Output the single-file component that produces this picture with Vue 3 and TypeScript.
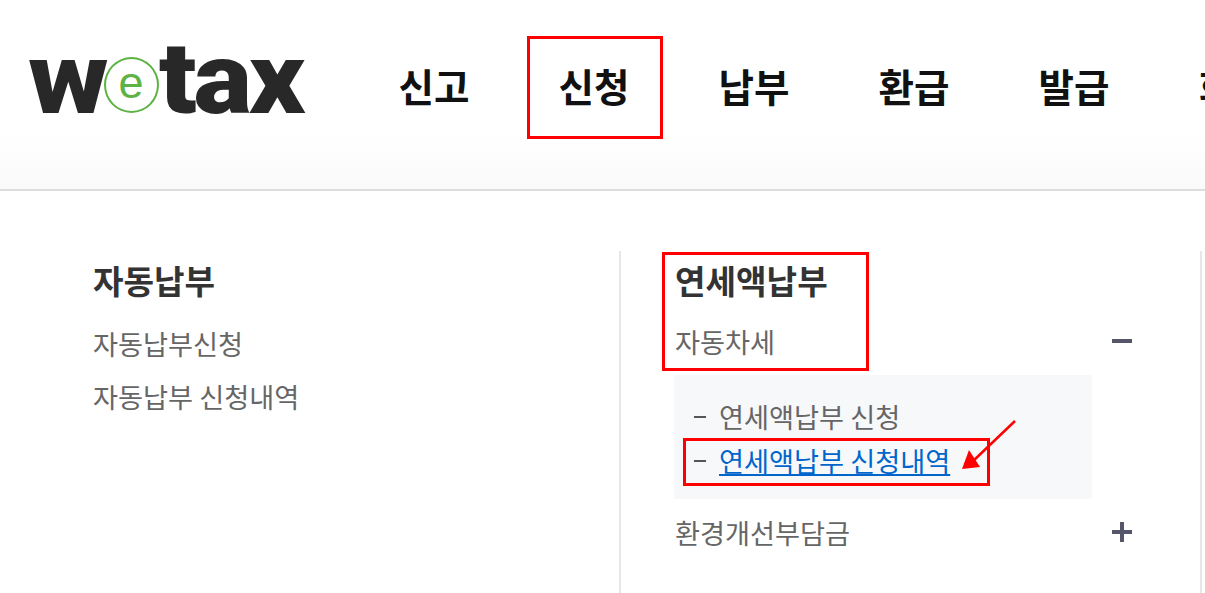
<template>
  <div class="page">
    <header class="top">
      <div class="logo">
        <span class="logo-w">w</span>
        <span class="logo-e">e</span>
        <span class="logo-rest">tax</span>
      </div>
      <nav class="gnb">
        <a v-for="m in menus" :key="m" class="gnb-item">{{ m }}</a>
      </nav>
    </header>

    <main class="sitemap">
      <section class="col col-first">
        <h2>자동납부</h2>
        <ul class="sub">
          <li>자동납부신청</li>
          <li>자동납부 신청내역</li>
        </ul>
      </section>
      <section class="col col-second">
        <h2>연세액납부</h2>
        <div class="acc-row">
          <span>자동차세</span>
          <i class="sign minus"></i>
        </div>
        <ul class="depth">
          <li>연세액납부 신청</li>
          <li><a href="#" @click.prevent>연세액납부 신청내역</a></li>
        </ul>
        <div class="acc-row second">
          <span>환경개선부담금</span>
          <i class="sign plus"></i>
        </div>
      </section>
    </main>

    <!-- 빨간 표시들 -->
    <div class="mark mark-nav"></div>
    <div class="mark mark-col"></div>
    <div class="mark mark-link"></div>
    <svg class="arrow" width="70" height="60" viewBox="0 0 70 60">
      <line x1="58" y1="2" x2="14" y2="44" stroke="#f00" stroke-width="2.5" />
      <polygon points="5,50 12,31 23,48" fill="#f00" />
    </svg>
  </div>
</template>

<script setup lang="ts">
const menus: string[] = ['신고', '신청', '납부', '환급', '발급', '회원']
</script>

<style>
html, body {
  margin: 0;
  background: #fff;
  overflow: hidden;
}
</style>

<style scoped>
.page {
  position: relative;
  width: 1205px;
  height: 593px;
  overflow: hidden;
  font-family: "Noto Sans CJK KR", "Noto Sans", sans-serif;
  color: #666;
}
.top {
  display: flex;
  align-items: flex-start;
  height: 189px;
  box-sizing: content-box;
  border-bottom: 2px solid #ddd;
  background: linear-gradient(to bottom, #fff 70%, #fafafa 100%);
}
.logo {
  flex: none;
  display: flex;
  align-items: center;
  width: 354px;
  height: 64px;
  margin-top: 47px;
  padding-left: 28px;
  box-sizing: border-box;
  font-family: Roboto, sans-serif;
  font-weight: 900;
  color: #282828;
  font-size: 100px;
  line-height: 64px;
}
.logo-w {
  display: inline-block;
  transform: scaleX(1.11);
  transform-origin: left center;
  margin-right: 7px;
  letter-spacing: -2px;
}
.logo-e {
  flex: none;
  width: 55px;
  height: 56px;
  margin: 11px 0 0 -2px;
  border: 2.5px solid #5cb343;
  border-radius: 50%;
  box-sizing: border-box;
  display: flex;
  align-items: center;
  justify-content: center;
  font-family: "Liberation Sans", sans-serif;
  font-weight: 400;
  font-size: 45px;
  line-height: 44px;
  padding-bottom: 4px;
  color: #5cb343;
}
.logo-rest {
  display: inline-block;
  transform: scaleX(1.1);
  transform-origin: left center;
  letter-spacing: -3px;
}
.gnb {
  display: flex;
  flex: none;
  margin-top: 53px;
}
.gnb-item {
  width: 160px;
  text-align: center;
  font-size: 38.6px;
  font-weight: 700;
  line-height: 64px;
  color: #111;
}
.sitemap {
  display: grid;
  grid-template-columns: 583px 581px;
  margin: 60px 0 0 38px;
}
.col {
  height: 342px;
  padding-left: 55px;
  border-right: 2px solid #e6e6e6;
  box-sizing: border-box;
}
.col-second {
  padding-left: 54px;
}
h2 {
  margin: 0;
  font-size: 33.2px;
  line-height: 58px;
  font-weight: 700;
  color: #333;
}
.sub {
  margin: 0;
  padding: 0;
  list-style: none;
  font-size: 27.2px;
  line-height: 53px;
  margin-top: 8px;
}
.acc-row {
  display: flex;
  align-items: center;
  justify-content: space-between;
  width: 457px;
  height: 54px;
  margin-top: 5px;
  font-size: 27.2px;
}
.acc-row.second {
  margin-top: 6px;
}
.sign {
  position: relative;
  display: block;
  width: 20px;
  height: 4px;
  background: #55566a;
}
.plus::after {
  content: "";
  position: absolute;
  left: 8px;
  top: -8px;
  width: 4px;
  height: 20px;
  background: #55566a;
}
.depth {
  width: 418px;
  height: 124px;
  margin: 7px 0 0 -1px;
  padding: 19px 0 0 20px;
  box-sizing: border-box;
  list-style: none;
  background: #f7f8fa;
  font-size: 27.2px;
  line-height: 44px;
}
.depth li {
  position: relative;
  padding-left: 25px;
}
.depth li::before {
  content: "";
  position: absolute;
  left: 0;
  top: 22px;
  width: 12px;
  height: 2px;
  background: #555;
}
.depth a {
  color: #0066cc;
  text-decoration: underline;
}
.mark {
  position: absolute;
  border: 3px solid #f00;
  box-sizing: border-box;
}
.mark-nav {
  left: 527px;
  top: 36px;
  width: 136px;
  height: 103px;
}
.mark-col {
  left: 662px;
  top: 252px;
  width: 207px;
  height: 119px;
}
.mark-link {
  left: 683px;
  top: 438px;
  width: 307px;
  height: 48px;
}
.arrow {
  position: absolute;
  left: 957px;
  top: 419px;
}
</style>
